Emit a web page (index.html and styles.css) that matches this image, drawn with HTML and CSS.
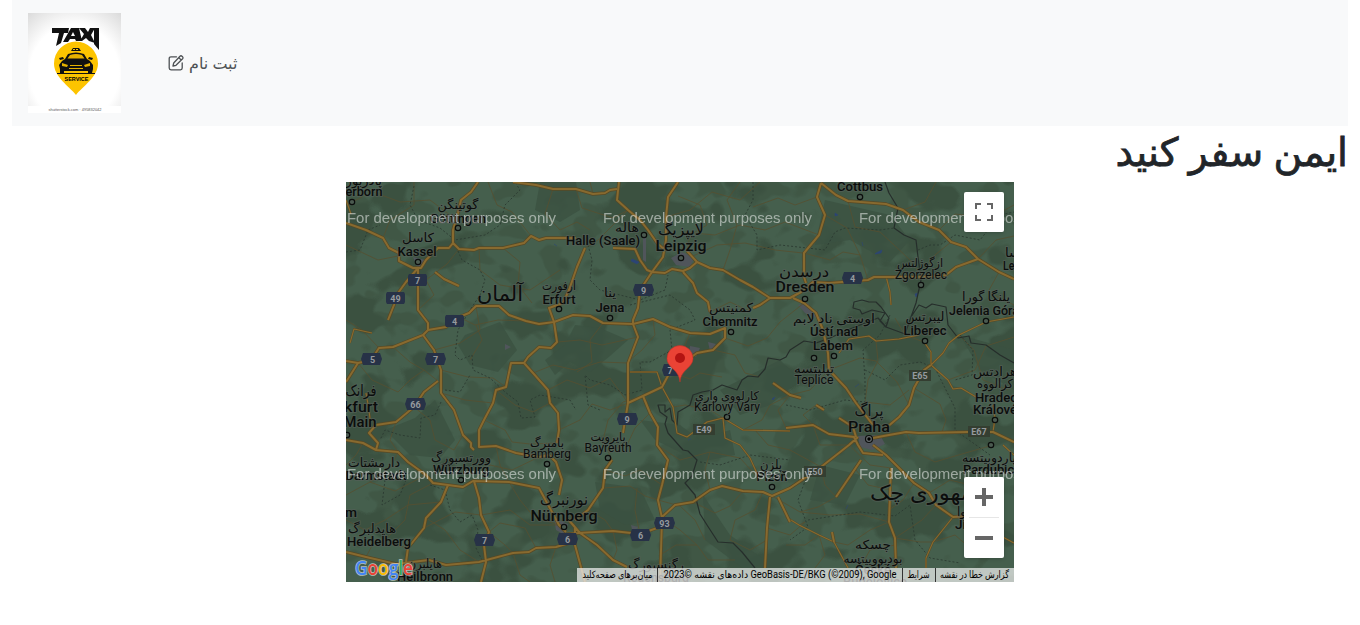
FILE: index.html
```html
<!DOCTYPE html>
<html lang="fa">
<head>
<meta charset="utf-8">
<title>ایمن سفر کنید</title>
<link rel="stylesheet" href="styles.css">
</head>
<body>
<div class="container">
<nav class="navbar">
  <svg class="logo" viewBox="0 0 93 100" width="93" height="100">
    <defs>
      <radialGradient id="paper" cx=".5" cy=".6" r=".8"><stop offset=".6" stop-color="#fff"/><stop offset="1" stop-color="#d8d8d8"/></radialGradient>
    </defs>
    <rect width="93" height="100" fill="url(#paper)"/>
    <rect y="93" width="93" height="7" fill="#fff"/>
    <path d="M48 82C41 73 26 64 26 50.500a22 22 0 0 1 44 0C70 64 55 73 48 82Z" fill="#fdc400"/>
    <g fill="#111">
      <path d="M24 15H41L40 20H36L33 30L28 33L31 20H24ZM43 15H51L54 28H48L47 26H42L40 29H35ZM45 19L43 23H47ZM51 15H57L60 19L62 15H67L63 22L67 30L61 28L58 25L54 28H52L56 21ZM68 15H71V37L66 31V15Z"/>
      <path d="M31 52L34 48L37 46L40 41Q48 38 56 41L59 46L62 48L65 52V56L64 60H60V58H36V60H32V56ZM43 38L45 35H51L53 38ZM31 45L35 44L36 46L32 47ZM65 45L61 44L60 46L64 47Z"/>
      <path d="M29 60H67V61H29Z"/>
    </g>
    <path d="M39.500 45.500L42 42Q48 40 54 42L56.500 45.500ZM34 50L40 52L39 54L34 53ZM62 50L56 52L57 54L62 53ZM42 52H54V53H42ZM41 55H55V56H41Z" fill="#e5b100"/>
    <path d="M45 36.500H51" stroke="#fdc400" stroke-dasharray="2 1"/>
    <text class="logo-service" x="48.500" y="68" textLength="24">SERVICE</text>
    <text class="logo-credit" x="47" y="98" textLength="53">shutterstock.com · 495832042</text>
  </svg>
  <a class="signup">
    <svg width="16" height="16" viewBox="0 0 16 16" fill="none" stroke="#4d5154" stroke-width="1.300" stroke-linecap="round" stroke-linejoin="round"><path d="M8.500 1.800H3Q1.200 1.800 1.200 3.500V13Q1.200 14.800 3 14.800H12.500Q14.200 14.800 14.200 13V8"/><path d="M12 1.200Q13 .3 14.300 1.400Q15.500 2.700 14.600 3.700L8 10.300L5 11L5.700 8ZM10.800 2.600L13.200 5"/></svg>
    <span>ثبت نام</span>
  </a>
</nav>
<h1>ایمن سفر کنید</h1>
<div class="map">
<svg class="tiles" viewBox="346 182 668 400" width="668" height="400">
  <defs>
    <filter id="forest" x="0" y="0" width="1" height="1" color-interpolation-filters="sRGB">
      <feTurbulence type="fractalNoise" baseFrequency=".018 .022" numOctaves="3" seed="11"/>
      <feColorMatrix values="0 0 0 0 .232  0 0 0 0 .318  0 0 0 0 .252  14 0 0 0 -7.600"/>
    </filter>
    <filter id="woods" x="0" y="0" width="1" height="1" color-interpolation-filters="sRGB">
      <feTurbulence type="fractalNoise" baseFrequency=".035 .045" numOctaves="2" seed="5"/>
      <feColorMatrix values="0 0 0 0 .25  0 0 0 0 .342  0 0 0 0 .272  0 14 0 0 -7.700"/>
    </filter>
    <g id="r">
      <path d="M346 223L366 230L383 238L389 248L399 253V261L413 268H421L426 260L438 248H449L453 243V230L458 213L461 200L471 192L478 182M453 243L459 249L474 250L479 248H503L524 243L531 236L539 240L546 238H576M513 182L536 185L553 189H576L593 194L605 193L610 190L617 189M418 268L406 282L398 293L394 305L388 320M418 268V310L428 323V330L423 335L393 347L379 348L371 360L358 363L346 361M435 272L444 279L459 286M428 330L446 327L459 317L469 313L476 306H499L509 315L526 321L539 324L554 322L573 315L590 316L603 323L633 324L653 319L670 327L690 333L710 334L725 328V338L713 350L697 353L670 372L662 387L643 396L628 403"/>
      <path d="M585 248L577 267L569 290L563 303L549 308L554 322L557 342L551 348L539 347L528 357L524 363H511L506 387L496 390L493 403L484 420L479 430V447L496 446L516 453L539 457L549 455L556 462L562 480L559 495M619 182L617 200L628 210L640 220L648 230L657 243L665 250M678 182L668 197L666 217V240L663 257L652 272L640 290L638 308L633 320V324L638 337L628 363V403L623 433M613 248L635 249L640 260L647 270L652 272L665 273L672 269L683 271L690 268L697 262L687 251M697 262L710 268L723 270L740 280L753 287L770 298H790L801 292L813 282L829 283L868 280L874 277H921L946 275L956 267L978 259M683 272L693 283L697 293L708 302L710 312M770 298L760 305L753 308"/>
      <path d="M821 183L817 197L825 215L819 235L804 253V277L806 283M821 183L836 195L848 201L886 204L903 210L919 222L939 230L951 242L966 247L978 259L999 272L1014 279M793 298L804 303L816 313L823 330L828 353L829 370L846 388L856 403L873 425M423 335L434 350L441 370V393L454 410L463 435L471 443V447L474 450M438 381L424 392L414 407L396 422L376 425L369 433L378 443L376 450M346 440L363 443L376 450L398 452L408 462L426 475L433 483L448 485L463 487L473 481L509 482L539 488L559 525L566 532M448 485L441 502L426 518L424 528L408 548L406 562M358 363L346 382M524 363L533 373L548 390L550 403L558 413L559 430L557 443M474 481L479 498L481 515L489 532L484 545L486 562L481 582M346 552L366 557L396 564L429 560L446 565L479 562L513 553L529 552L536 548L556 547L576 541"/>
      <path d="M643 396L650 413L658 427L657 445L668 460L662 485L658 500L662 518L660 582M567 518L580 533L597 545L613 560L627 567M575 520L588 510L603 488L605 470L612 460M560 535L578 533L613 531L640 534L660 527M575 528V545L585 582M662 517L675 505L693 502L710 490L722 486L743 491L763 492L772 496L790 488L821 467L849 445L858 437M770 497L767 528L765 568M778 497L790 522M786 428L813 425L829 434L854 437L858 445L863 453L883 455M839 418L853 427L856 437M873 438L889 435L906 432L919 433L968 432H993L1014 442M886 428L899 417L909 405L914 388L924 370L931 365M873 445L886 455L914 483L929 493L936 505L953 517L970 516M861 460L836 497M891 468L889 522L895 538L896 568M773 383L790 395L801 398M816 405L824 410M832 532L834 542"/>
    </g>
    <g id="r2">
      <path d="M931 365V352L924 342M931 365L948 380L953 389L961 388L976 397M931 365L943 353L949 343L959 335L986 322L1014 317M630 372L657 372L662 387L673 407L677 433L687 437L707 422L723 418L743 430L790 431M723 418L725 438L740 445L750 458L760 480M786 517L799 525L819 535L834 542L848 568M953 517L933 542L926 558V568M839 353L849 339L869 336L876 341L899 339L919 335M993 432L995 418L993 405M1003 445L1014 455M999 535L1014 543M886 276L890 292L891 305M366 393L369 410L371 428M350 343L354 329L372 333M346 200L351 214"/>
    </g>
    <circle id="marker-dot" r="2.700" fill="#4b5a50" stroke="#0b0d0c" stroke-width="1.200"/>
  </defs>
  <rect x="346" y="182" width="668" height="400" fill="#455f4d"/>
  <rect x="346" y="182" width="668" height="400" filter="url(#woods)"/>
  <rect x="346" y="182" width="668" height="400" filter="url(#forest)"/>
  <path class="wood" d="M540 182H576L580 210L560 222L535 210ZM575 325L600 328L628 340L610 356L590 372L570 362L555 375L545 360L565 345ZM465 335L500 322L517 350L498 372L470 365L458 345ZM385 430L415 418L435 400L455 440L440 458L410 455ZM640 420L655 440L700 462L735 455L730 430L700 440L680 425ZM720 390L780 360L800 380L770 405L740 415ZM703 495L730 535L765 560L748 572L705 540ZM825 200L890 215L910 240L890 262L850 240L815 245ZM595 482L640 488L655 520L625 525L600 510ZM960 335L1014 350V390L980 370ZM820 465L860 475L845 505L810 500Z"/>
  <path class="town" d="M682 252L694 258L690 267L676 265L671 258ZM798 305L808 303L817 318L805 313ZM858 436L880 435L885 444L872 450L860 447ZM690 346L700 348L696 357L689 354ZM708 342L716 344L710 351ZM413 257L425 260L418 269ZM505 344L511 347L505 350ZM631 525L638 527L633 534ZM643 235H646V262L643 260ZM554 518L568 524L565 535L556 530Z"/>
  <path class="water" d="M632 259L639 262L637 264L631 261ZM876 253L882 250L881 253L875 254ZM835 213L838 215L835 216ZM862 242L863 246M772 399L775 397L773 400ZM915 294L918 293L916 297ZM855 387L859 384M846 509L848 505M554 244L557 246M688 440L691 439"/>
  <g class="minor">
    <path d="M368 190L400 202L430 200L450 215M370 182L362 197L346 205M383 238L390 220L414 205V182M346 245L378 260L398 256M459 249L447 264L426 280L434 295L418 310M479 248L480 270L500 285L530 290L545 280L560 270M503 248L520 262L518 285L532 303M488 182L497 205L512 212L531 236M553 189L545 214L560 230L577 222L590 230M576 189L582 208L613 218L628 210M593 194L590 182M628 210L610 228L598 240L585 248M678 196L700 205L707 225L690 235L687 251M666 217L690 210L712 192L740 200L760 182M693 256L717 245L745 243L775 250L803 253M723 270L730 250L737 225L727 200L740 182M683 232L715 235L740 225L765 230L785 222L819 235M817 197L795 205L778 198L753 207M825 215L847 228L860 255L868 280M848 201L855 227L880 232L893 244L910 260L921 275M903 210L925 202L936 182M939 230L955 214L990 218L1014 205M804 253L830 260L843 252L860 255M951 242L935 255L921 275M978 259L996 240L1014 236M999 272L988 292L1014 305"/>
    <path d="M393 347L410 362L424 370L438 381M346 320L362 330L379 348M358 363L372 380L398 392L410 380L424 370M434 350L460 343L480 330L476 306M470 360L482 340L476 325M441 370L468 377L493 378L506 387M459 317L475 325L498 320L526 321M441 393L465 400L493 403M396 422L390 440L398 452M414 407L430 420L435 440L454 450L463 435M496 390L515 405L533 412L550 403M484 420L505 430L512 442L530 444L557 443M533 373L553 365L575 370L600 362L628 363M557 342L580 340L602 345L638 337M548 390L567 380L590 388L610 378L628 403M559 430L580 420L592 404L610 410L628 403M603 323L590 340L592 362L577 372M653 319L655 335L642 350L630 360M690 333L683 350M710 312L730 302L747 310L770 298M725 338L748 346L767 338L780 322L804 303M713 350L735 355L745 373L760 377M670 372L690 379L700 373L722 377M643 396L623 402L608 420L603 440L612 460M673 407L685 405L710 410L723 418M650 413L635 428L627 445L610 450M790 395L770 405L762 420L743 430M786 428L778 410L790 395L810 390L829 370M816 405L803 415L813 425M829 370L860 358L876 361L897 382L909 405M869 336L876 341L878 361L868 380L865 402L890 405L909 390M924 342L905 335L895 318M948 380L975 370L986 346L1014 337M959 335L974 350L983 380L1008 390M914 388L940 404L946 420L942 432M906 432L915 452L935 462L955 456L993 445"/>
    <path d="M346 495L370 482L395 491L426 475M398 452L390 468L370 482M346 520L365 530L385 520L408 505L441 502M366 557L375 540L408 548M426 518L445 530L460 550L479 562M424 528L455 512L481 515M433 483L410 495L405 520L385 540M473 481L490 465L512 470L539 457M496 446L500 465L509 482L520 500L534 517L559 525M481 515L510 510L530 525L559 525M489 532L505 545L513 553L520 575L530 582M536 548L525 528L500 523L489 532M556 547L550 565L555 582M603 488L630 486L645 496L658 500M605 470L625 476L640 470L662 485M588 510L605 520L613 531L617 550L613 560M640 534L635 510L637 488M658 500L680 506L695 520L705 540M662 518L680 530L697 545L708 560L735 560M660 555L676 545L697 545M657 445L680 460L710 452L740 458L760 480M693 502L715 513L730 506L743 491M710 490L705 470L710 452M763 492L755 510L735 520L730 540L750 550L767 540M767 528L790 535L805 522L799 525M772 496L800 512L830 515L860 514L889 522M836 497L818 507L800 512M849 445L870 465L891 468M821 467L825 485L836 497M856 470L868 485L891 490M914 483L903 500L889 510M936 505L922 520L895 538M889 522L870 530L848 545L834 542M895 538L920 542L933 542L955 535L970 548M860 568L870 550L895 545M786 545L805 545L819 535L825 555L815 568M929 493L950 480L970 485M755 430L768 445L790 450L821 467M813 425L820 445L849 445M346 465L356 455L363 443"/>
  </g>
  <g class="region">
    <path d="M346 252L360 250L368 230L380 225M414 186L410 205L418 220L440 228L455 240L485 235L500 225L505 205L520 190L515 182M453 240L462 260L480 270L485 280L480 295L470 310L458 330L455 355L460 360L472 355L473 370L490 378L505 392L518 402L521 418L535 417L530 400L540 395L570 400L576 410M753 182L753 200L745 215L757 235L757 250L780 245L825 250L835 232L845 228L880 230L894 228M588 245L592 260L590 280L600 290L640 300L665 290L668 275M630 305L670 295L690 310L695 320L670 330L672 350L650 362L640 362L642 390L625 395L610 385L590 380L585 375L588 405L600 410M445 390L460 392L470 375M441 402L435 415L421 418L420 438L400 435L385 430L380 440M385 480L382 505L400 495L410 470M430 485L445 490L450 510L460 522L472 515L478 530L476 548L482 560M918 250L930 245L940 245L955 235L980 240L1000 215L1014 212M786 405L810 410L845 400L865 402L865 380L863 350L880 335L890 315M865 370L885 380L900 365L920 362L935 368L946 390L955 408L955 430L990 455M700 462L720 465L750 455L790 460M810 468L798 500L808 527L790 540M808 520L860 512L895 516L910 505L915 540L930 558L960 563M960 335L973 350L972 375L955 380"/>
  </g>
  <path class="border" d="M885 182L889 193L898 208L894 228L904 235L916 240L918 257L921 280L916 303L911 317L905 334L886 327L889 318L881 307L876 302L869 302L862 300L854 302L853 308L860 310L862 314L872 310L885 313L880 321L886 327L878 318L860 325L845 331L830 338L816 343L804 341L790 350L786 357L780 360L768 358L765 369L758 377L748 376L742 380L737 390L722 385L713 390L702 392L693 395L690 405L678 412L677 425L672 420L670 408L665 412L665 405H658L660 412L667 417L665 424L668 433L683 450L688 451L697 460L692 476L685 483L695 495L700 514L707 525L718 542L733 543L742 552L755 568M911 317L919 305L926 308L932 304L946 307L948 325L958 338L969 336L971 343L986 345L1000 355L1014 363"/>
  <use href="#r2" class="road-edge thin"/><use href="#r2" class="road thin-core"/>
  <use href="#r" class="road-edge"/><use href="#r" class="road"/>
  <g class="shields">
    <path d="M409 274H426L427 276V284L426 286H409L408 284V276ZM387 292H404L405 294V302L404 304H387L386 302V294ZM446 315H463L464 317V325L463 327H446L445 325V317ZM363 353H380L382 359L380 365H363L361 359ZM427 353H444L446 359L444 365H427L425 359ZM407 398H424L426 404L424 410H407L405 404ZM635 284H652L654 290L652 296H635L633 290ZM844 272H861L863 278L861 284H844L842 278ZM619 413H636L638 419L636 425H619L617 419ZM664 364H681L683 370L681 376H664L662 370ZM476 534H493L495 540L493 546H476L474 540ZM559 533H576L578 539L576 545H559L557 539ZM632 529H649L651 535L649 541H632L630 535ZM656 517H673L675 523L673 529H656L654 523Z" fill="#273247"/>
    <path d="M693 424H715V435H693ZM909 370H931V381H909ZM968 426H990V437H968ZM804 466H826V477H804Z" fill="#343e31"/>
    <g class="shield-text"><text x="417.500" y="283.500">7</text><text x="395.500" y="301.500">49</text><text x="454.500" y="324.500">4</text><text x="372.500" y="362.500">5</text><text x="435.500" y="362.500">7</text><text x="415.500" y="407.500">66</text><text x="643.500" y="293.500">9</text><text x="852.500" y="281.500">4</text><text x="627" y="422.500">9</text><text x="670" y="373.500">7</text><text x="484.500" y="543.500">7</text><text x="567.500" y="542.500">6</text><text x="640.500" y="538.500">6</text><text x="664.500" y="526.500">93</text><text x="704" y="433">E49</text><text x="920" y="379">E65</text><text x="979" y="435">E67</text><text x="815" y="475">E50</text></g>
  </g>
  <g>
    <use href="#marker-dot" x="352" y="202"/><use href="#marker-dot" x="458" y="228"/><use href="#marker-dot" x="418" y="262"/><use href="#marker-dot" x="559" y="309"/><use href="#marker-dot" x="610" y="318"/><use href="#marker-dot" x="644" y="235"/><use href="#marker-dot" x="681" y="258"/><use href="#marker-dot" x="860" y="197"/><use href="#marker-dot" x="805" y="299"/><use href="#marker-dot" x="921" y="285"/><use href="#marker-dot" x="731" y="332"/><use href="#marker-dot" x="814" y="358"/><use href="#marker-dot" x="834" y="356"/><use href="#marker-dot" x="925" y="341"/><use href="#marker-dot" x="986" y="321"/><use href="#marker-dot" x="727" y="417"/><use href="#marker-dot" x="995" y="420"/><use href="#marker-dot" x="991" y="445"/><use href="#marker-dot" x="547" y="464"/><use href="#marker-dot" x="608" y="458"/><use href="#marker-dot" x="461" y="480"/><use href="#marker-dot" x="564" y="527"/><use href="#marker-dot" x="772" y="487"/><use href="#marker-dot" x="347" y="435"/>
    <circle cx="869" cy="439" r="3.500" fill="#666b6c" stroke="#0b0d0c" stroke-width="1.200"/><circle cx="869" cy="439" r="1.700"/>
  </g>
  <g class="labels">
    <g class="s12">
      <text x="359" y="185" textLength="46">پادربورن</text><text x="364" y="196" textLength="37">erborn</text>
      <text x="458" y="209" textLength="41">گوتینگن</text><text x="458" y="223" textLength="56">Göttingen</text>
      <text x="418" y="242" textLength="32">کاسل</text><text x="417" y="256" textLength="39">Kassel</text>
      <text x="559" y="290" textLength="34">ارفورت</text><text x="559" y="304" textLength="33">Erfurt</text>
      <text x="610" y="297" textLength="12">ینا</text><text x="610" y="312" textLength="29">Jena</text>
      <text x="627" y="232" textLength="24">هاله</text><text x="603" y="245" textLength="74">Halle (Saale)</text>
      <text x="860" y="191" textLength="46">Cottbus</text>
      <text x="731" y="312" textLength="44">کمنیتس</text><text x="730" y="326" textLength="55">Chemnitz</text>
      <text x="834" y="323" textLength="82">اوستی ناد لابم</text><text x="834" y="336" textLength="48">Ústí nad</text><text x="833" y="350" textLength="40">Labem</text>
      <text x="925" y="321" textLength="39">لیبرتس</text><text x="925" y="335" textLength="43">Liberec</text>
      <text x="986" y="301" textLength="48">یلنگا گورا</text><text x="984" y="315" textLength="70">Jelenia Góra</text>
      <text x="1015" y="257" textLength="20">لسا</text><text x="1014" y="270" textLength="22">Lesz</text>
      <text x="995" y="376" textLength="44">هرادتس</text><text x="995" y="388" textLength="36">کرالووه</text><text x="996" y="402" textLength="42">Hradec</text><text x="995" y="414" textLength="44">Králové</text>
      <text x="461" y="462" textLength="60">وورتسبورگ</text><text x="461" y="474" textLength="56">Würzburg</text>
      <text x="374" y="467" textLength="52">دارمشتات</text><text x="376" y="480" textLength="61">Darmstadt</text>
      <text x="372" y="533" textLength="48">هایدلبرگ</text><text x="379" y="546" textLength="64">Heidelberg</text><text x="351" y="517" textLength="12">m</text>
      <text x="425" y="568" textLength="34">هایلبرن</text><text x="425" y="581" textLength="56">Heilbronn</text>
      <text x="656" y="569" textLength="56">رگنسبورگ</text><text x="656" y="582" textLength="66">Regensburg</text>
      <text x="771" y="469" textLength="22">پلزن</text><text x="772" y="481" textLength="31">Plzeň</text>
      <text x="989" y="462" textLength="54">پاردوبیتسه</text><text x="992" y="474" textLength="58">Pardubice</text>
      <text x="873" y="549" textLength="36">چسکه</text><text x="873" y="563" textLength="59">بودیووییتسه</text><text x="873" y="574" textLength="36">České</text><text x="875" y="586" textLength="64">Budějovice</text>
      <text x="965" y="516" textLength="16">لاوا</text><text x="966" y="529" textLength="22">Jihl</text>
    </g>
    <g class="s12 regular">
      <text x="920" y="267" textLength="46">ازگوژلتس</text><text x="921" y="279" textLength="52">Zgorzelec</text>
      <text x="814" y="373" textLength="40">تپلیتسه</text><text x="814" y="384" textLength="39">Teplice</text>
      <text x="727" y="400" textLength="64">کارلووی واری</text><text x="727" y="411" textLength="66">Karlovy Vary</text>
      <text x="547" y="447" textLength="34">بامبرگ</text><text x="547" y="458" textLength="48">Bamberg</text>
      <text x="608" y="441" textLength="35">بایرویت</text><text x="608" y="452" textLength="47">Bayreuth</text>
    </g>
    <g class="s16">
      <text x="681" y="235" textLength="46">لایپزیگ</text><text x="681" y="251" textLength="51">Leipzig</text>
      <text x="804" y="277" textLength="50">درسدن</text><text x="805" y="292" textLength="59">Dresden</text>
      <text x="869" y="416" textLength="29">پراگ</text><text x="869" y="432" textLength="42">Praha</text>
      <text x="564" y="505" textLength="48">نورنبرگ</text><text x="564" y="521" textLength="67">Nürnberg</text>
      <text x="361" y="396" textLength="31">فرانک</text><text x="361" y="412" textLength="34">kfurt</text><text x="360" y="427" textLength="33">Main</text>
    </g>
    <g class="country"><text x="500" y="301" textLength="46">آلمان</text><text x="929" y="500" textLength="118">جمهوری چک</text></g>
  </g>
  <g class="watermark">
    <text x="347" y="222.500" textLength="209">For development purposes only</text><text x="603" y="222.500" textLength="209">For development purposes only</text><text x="859" y="222.500" textLength="209">For development purposes only</text>
    <text x="347" y="478.500" textLength="209">For development purposes only</text><text x="603" y="478.500" textLength="209">For development purposes only</text><text x="859" y="478.500" textLength="209">For development purposes only</text>
  </g>
  <path d="M680 382C679 369 667 368 667 358.500a13 13 0 0 1 26 0C693 368 681 369 680 382Z" fill="#ea4335" stroke="#b8352a" stroke-width=".6"/><circle cx="680" cy="358" r="5" fill="#b31412"/>
  <g class="google"><text x="355" y="575" textLength="58"><tspan fill="#4285f4">G</tspan><tspan fill="#ea4335">o</tspan><tspan fill="#fbbc04">o</tspan><tspan fill="#4285f4">g</tspan><tspan fill="#34a853">l</tspan><tspan fill="#ea4335">e</tspan></text></g>
</svg>
<div class="control fullscreen"><svg width="18" height="18" viewBox="0 0 18 18"><path d="M1 6V1H6M12 1H17V6M17 12V17H12M6 17H1V12" fill="none" stroke="#666" stroke-width="2"/></svg></div>
<div class="control zoom">
  <div class="zoom-button"><svg width="18" height="18"><path d="M7 0h4v7h7v4h-7v7H7v-7H0V7h7z" fill="#666"/></svg></div>
  <div class="zoom-line"></div>
  <div class="zoom-button"><svg width="18" height="18"><path d="M0 7h18v4H0z" fill="#666"/></svg></div>
</div>
<div class="legal">
  <svg width="437" height="14"><g class="legal-text"><text x="40.500" y="10" textLength="70">میان‌برهای صفحه‌کلید</text><text x="203" y="10" textLength="233">داده‌های نقشه ©2023 GeoBasis-DE/BKG (©2009), Google</text><text x="341.500" y="10" textLength="22">شرایط</text><text x="397.500" y="10" textLength="69">گزارش خطا در نقشه</text></g><path d="M80.500 0V14M325.500 0V14M358.500 0V14" stroke="#333"/></svg>
</div>
</div>
</div>
<script src="labels.js"></script>
</body>
</html>
```
FILE: styles.css
```css
* { box-sizing: border-box; }
body { margin: 0; background: #fff; color: #212529; font-family: "Noto Sans", "DejaVu Sans", sans-serif; overflow: hidden; }
.container { padding: 0 12px; }
.navbar { height: 126px; background: #f8f9fa; padding: 0 16px; display: flex; align-items: center; gap: 47px; }
.logo { display: block; }
.logo-service { font: bold 6px "Liberation Sans", sans-serif; text-anchor: middle; }
.logo-credit { font: 4px "Liberation Sans", sans-serif; text-anchor: middle; fill: #555; }
.signup { display: flex; align-items: center; gap: 5px; color: #4d5154; font-size: 16px; line-height: 24px; }
h1 { margin: 0; padding-top: 1px; height: 56px; font-size: 39.3px; line-height: 49px; font-weight: 500; -webkit-text-stroke: .8px #212529; text-align: right; direction: rtl; white-space: nowrap; }
.map { width: 668px; height: 400px; margin: 0 auto; position: relative; overflow: hidden; }
.tiles { display: block; }
.wood { fill: #3b5141; opacity: .8; }
.town { fill: #50555b; }
.water { fill: #2c4475; stroke: #2c4475; stroke-width: .6; }
.minor { fill: none; stroke: #574f30; stroke-width: .8; stroke-linejoin: round; }
.region { fill: none; stroke: #2b3a31; stroke-width: .9; stroke-dasharray: 2 2; }
.border { fill: none; stroke: #262e2b; stroke-width: 1.2; stroke-linejoin: round; }
.road-edge { fill: none; stroke: #574925; stroke-width: 3.4; stroke-linejoin: round; }
.road { fill: none; stroke: #886a2f; stroke-width: 2; stroke-linejoin: round; }
.thin { stroke-width: 1.9; }
.thin-core { stroke-width: 1.1; }
.shield-text { font: bold 9px Roboto, sans-serif; fill: #969a9e; text-anchor: middle; }
.labels { font-family: Roboto, "DejaVu Sans", sans-serif; text-anchor: middle; fill: #0b0d0c; stroke: #56605a; stroke-width: 2px; stroke-opacity: .6; paint-order: stroke; stroke-linejoin: round; }
.s12 { font-size: 12.5px; font-weight: 500; }
.regular { font-size: 12px; font-weight: 400; }
.s16 { font-size: 15.5px; font-weight: 500; }
.country { font-size: 21px; }
.watermark { font: 15px "Liberation Sans", sans-serif; fill: #fff; opacity: .5; }
.google { font: 600 19px "Open Sans", sans-serif; stroke: #fff; stroke-width: 1.6px; stroke-opacity: .6; paint-order: stroke; }
.control { position: absolute; right: 10px; width: 40px; background: #fff; border-radius: 2px; box-shadow: 0 1px 4px -1px rgba(0,0,0,.3); }
.fullscreen { top: 10px; height: 40px; display: flex; align-items: center; justify-content: center; }
.zoom { top: 295px; height: 81px; }
.zoom-button { height: 40px; display: flex; align-items: center; justify-content: center; }
.zoom-line { height: 1px; width: 30px; margin: 0 auto; background: #e6e6e6; }
.legal { position: absolute; right: 0; bottom: 0; width: 437px; height: 14px; background: rgba(245,245,245,.7); }
.legal svg { display: block; }
.legal-text { font: 10px Roboto, "DejaVu Sans", sans-serif; text-anchor: middle; fill: #000; }
```
FILE: labels.js
```js
// Scale glyphs instead of spacing them, so joined letters stay joined.
document.querySelectorAll('text[textLength]').forEach(function (label) {
  label.setAttribute('lengthAdjust', 'spacingAndGlyphs');
});
```
